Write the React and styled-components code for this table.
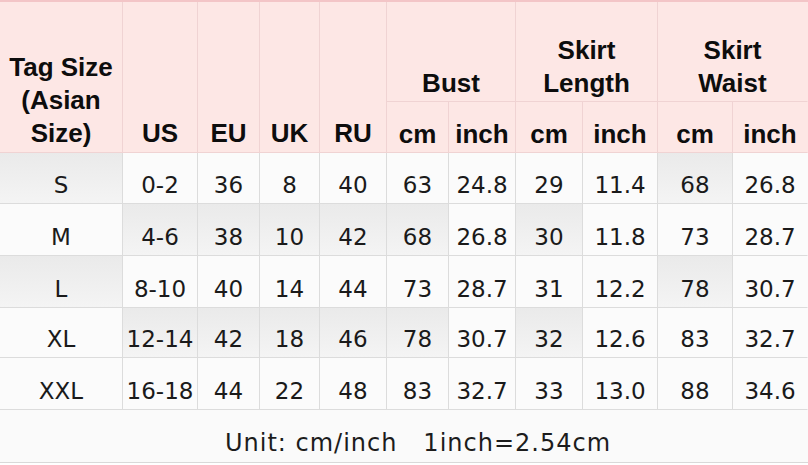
import React from 'react'
import styled, { createGlobalStyle } from 'styled-components'

const GlobalStyle = createGlobalStyle`
  html, body {
    margin: 0;
    padding: 0;
    background: #ffffff;
  }
`

const COLUMNS = [123, 75, 62, 60, 67, 62, 67, 67, 75, 75, 75]

const ROWS = [
  { tag: 'S', values: ['0-2', '36', '8', '40', '63', '24.8', '29', '11.4', '68', '26.8'], shade: [1, 0, 0, 0, 0, 0, 0, 0, 0, 1, 0], height: 51 },
  { tag: 'M', values: ['4-6', '38', '10', '42', '68', '26.8', '30', '11.8', '73', '28.7'], shade: [0, 1, 1, 1, 1, 1, 0, 1, 0, 0, 0], height: 52 },
  { tag: 'L', values: ['8-10', '40', '14', '44', '73', '28.7', '31', '12.2', '78', '30.7'], shade: [1, 0, 0, 0, 0, 0, 0, 0, 0, 1, 0], height: 52 },
  { tag: 'XL', values: ['12-14', '42', '18', '46', '78', '30.7', '32', '12.6', '83', '32.7'], shade: [0, 1, 1, 1, 1, 1, 0, 1, 0, 0, 0], height: 50 },
  { tag: 'XXL', values: ['16-18', '44', '22', '48', '83', '32.7', '33', '13.0', '88', '34.6'], shade: [0, 0, 0, 0, 0, 0, 0, 0, 0, 0, 0], height: 52 },
]

const Chart = styled.div`
  display: grid;
  width: 808px;
  grid-template-columns: ${COLUMNS.map((w) => `${w}px`).join(' ')};
  grid-template-rows: 100px 51px ${ROWS.map((r) => `${r.height}px`).join(' ')} 52px;
  border-top: 2px solid #f3c5c7;
  border-bottom: 1px solid #d9d9d9;
`

const HeadCell = styled.div`
  box-sizing: border-box;
  display: flex;
  flex-direction: column;
  justify-content: flex-end;
  align-items: center;
  text-align: center;
  background: #fde7e5;
  border-right: 1px solid ${({ $last }) => ($last ? 'transparent' : '#f0d3d3')};
  border-bottom: 1px solid #f0d3d3;
  font-family: 'Liberation Sans', Arial, sans-serif;
  font-weight: 700;
  font-size: 26px;
  line-height: 33px;
  color: #0d0d0d;
  padding-bottom: ${({ $pad }) => $pad ?? 2}px;
  grid-row: ${({ $rows }) => ($rows ? `span ${$rows}` : 'auto')};
  grid-column: ${({ $cols }) => ($cols ? `span ${$cols}` : 'auto')};
`

const Cell = styled.div`
  box-sizing: border-box;
  display: flex;
  justify-content: center;
  align-items: flex-end;
  padding-bottom: 5px;
  background: ${({ $shade }) => ($shade ? 'linear-gradient(180deg, #eaeaea 0%, #f4f4f4 100%)' : '#fbfbfb')};
  border-right: 1px solid ${({ $last }) => ($last ? 'transparent' : '#dcdcdc')};
  border-bottom: 1px solid #dcdcdc;
  font-family: 'DejaVu Sans', Verdana, sans-serif;
  font-size: 23px;
  line-height: 26px;
  color: #1a1a1a;
  white-space: nowrap;
`

const FootCell = styled.div`
  grid-column: 1 / -1;
  display: flex;
  justify-content: center;
  align-items: flex-end;
  padding: 0 0 6px 28px;
  background: #fafafa;
  font-family: 'DejaVu Sans', Verdana, sans-serif;
  font-size: 24px;
  line-height: 26px;
  letter-spacing: 1px;
  color: #1c1c1c;
  white-space: pre;
`

const SizeChart = () => {
  const last = COLUMNS.length - 1

  return (
    <Chart>
      <HeadCell $rows={2}>Tag Size<br />(Asian<br />Size)</HeadCell>
      {['US', 'EU', 'UK', 'RU'].map((label) => (
        <HeadCell key={label} $rows={2}>{label}</HeadCell>
      ))}
      <HeadCell $cols={2} $pad={1}>Bust</HeadCell>
      <HeadCell $cols={2} $pad={1}>Skirt<br />Length</HeadCell>
      <HeadCell $cols={2} $pad={1} $last>Skirt<br />Waist</HeadCell>
      {['cm', 'inch', 'cm', 'inch', 'cm', 'inch'].map((unit, i) => (
        <HeadCell key={`${unit}-${i}`} $pad={1} $last={i === 5}>{unit}</HeadCell>
      ))}

      {ROWS.map((row) => (
        <React.Fragment key={row.tag}>
          <Cell $shade={row.shade[0]}>{row.tag}</Cell>
          {row.values.map((value, i) => (
            <Cell
              key={`${row.tag}-${i}`}
              $shade={row.shade[i + 1]}
              $last={i + 1 === last}
            >
              {value}
            </Cell>
          ))}
        </React.Fragment>
      ))}

      <FootCell>{'Unit: cm/inch   1inch=2.54cm'}</FootCell>
    </Chart>
  )
}

const App = () => (
  <>
    <GlobalStyle />
    <SizeChart />
  </>
)

export default App
